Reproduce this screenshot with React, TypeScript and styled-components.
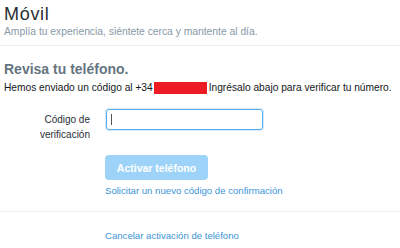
import React from 'react';
import styled, { createGlobalStyle } from 'styled-components';

const GlobalStyle = createGlobalStyle`
  body {
    margin: 0;
    background: #ffffff;
    font-family: "Liberation Sans", Arial, sans-serif;
    color: #14171a;
  }
`;

const Page = styled.div`
  width: 400px;
  height: 248px;
  overflow: hidden;
  background: #ffffff;
`;

const Header = styled.header`
  padding: 3px 4px 7px;
  border-bottom: 1px solid #e9eef2;
`;

const Title = styled.h1`
  margin: 0;
  font-size: 18px;
  line-height: 22px;
  font-weight: normal;
  letter-spacing: 0.7px;
  color: #292f33;
`;

const Subtitle = styled.p`
  margin: 0;
  font-size: 10.3px;
  line-height: 13px;
  color: #8899a6;
`;

const Content = styled.section`
  padding: 14px 4px 0;
`;

const Heading = styled.h2`
  margin: 0;
  font-size: 14px;
  line-height: 18px;
  font-weight: bold;
  color: #66757f;
`;

const Lead = styled.p`
  margin: 3px 0 0;
  font-size: 10.2px;
  line-height: 14px;
  color: #14171a;
  display: flex;
  align-items: center;
  white-space: nowrap;
`;

const Redacted = styled.span`
  display: inline-block;
  width: 53px;
  height: 12px;
  background: #ed1c24;
  margin: 0 2px 0 1px;
`;

const FieldRow = styled.div`
  display: flex;
  align-items: flex-start;
  gap: 16px;
  margin-top: 14px;
`;

const Label = styled.label`
  width: 86px;
  text-align: right;
  font-size: 10px;
  line-height: 15px;
  padding-top: 3px;
  color: #292f33;
`;

const Input = styled.div`
  box-sizing: border-box;
  width: 157px;
  height: 21px;
  border: 1px solid #55acee;
  border-radius: 3px;
  box-shadow: 0 0 0 1px rgba(85, 172, 238, 0.25);
  display: flex;
  align-items: center;
  padding-left: 4px;
`;

const Caret = styled.span`
  width: 1px;
  height: 11px;
  background: #555;
`;

const Actions = styled.div<{ $top: number }>`
  padding-left: 101px;
  margin-top: ${(p) => p.$top}px;
  display: flex;
  flex-direction: column;
  align-items: flex-start;
  gap: 4px;
`;

const Button = styled.button`
  width: 103px;
  height: 25px;
  border: none;
  border-radius: 4px;
  background: #9dd3f8;
  color: #ffffff;
  font-family: inherit;
  font-size: 10.5px;
  font-weight: bold;
  padding: 0;
`;

const Link = styled.a`
  font-size: 9.6px;
  line-height: 13px;
  color: #3b94d9;
  text-decoration: none;
`;

const Divider = styled.hr`
  border: none;
  border-top: 1px solid #eef1f3;
  margin: 14px 0 0;
`;

const Footer = styled.div`
  padding: 0 4px;
`;

const App: React.FC = () => {
  return (
    <Page>
      <GlobalStyle />
      <Header>
        <Title>Móvil</Title>
        <Subtitle>Amplía tu experiencia, siéntete cerca y mantente al día.</Subtitle>
      </Header>

      <Content>
        <Heading>Revisa tu teléfono.</Heading>
        <Lead>
          Hemos enviado un código al +34<Redacted /> Ingrésalo abajo para verificar tu número.
        </Lead>

        <FieldRow>
          <Label>
            Código de
            <br />
            verificación
          </Label>
          <Input>
            <Caret />
          </Input>
        </FieldRow>

        <Actions $top={13}>
          <Button>Activar teléfono</Button>
          <Link href="#">Solicitar un nuevo código de confirmación</Link>
        </Actions>
      </Content>

      <Divider />

      <Footer>
        <Actions $top={17}>
          <Link href="#">Cancelar activación de teléfono</Link>
        </Actions>
      </Footer>
    </Page>
  );
};

export default App;
